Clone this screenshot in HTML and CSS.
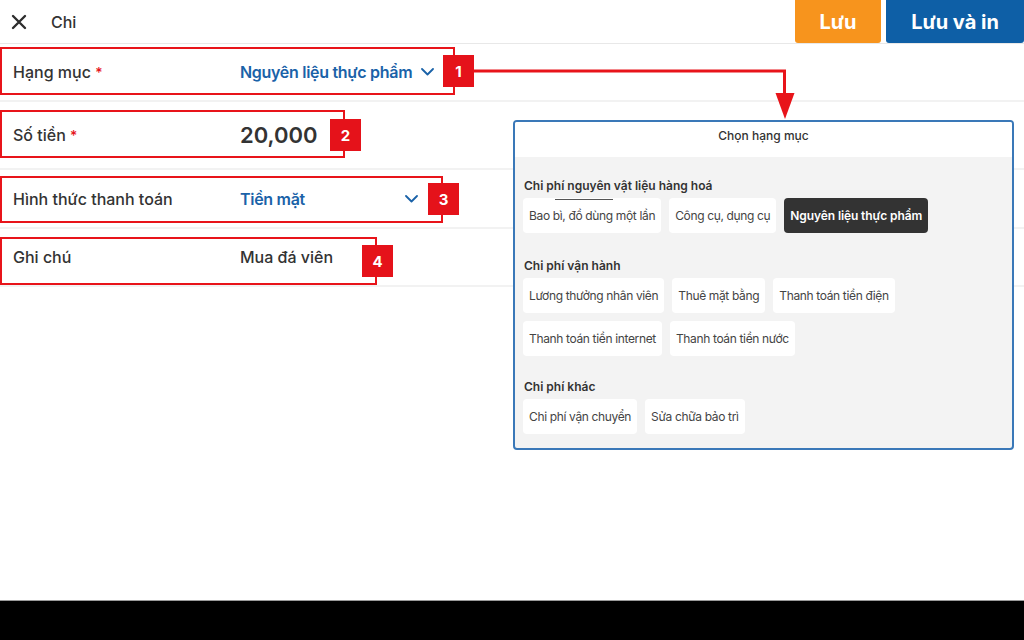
FILE: index.html
```html
<!DOCTYPE html>
<html lang="vi">
<head>
<meta charset="utf-8">
<title>Chi</title>
<link rel="stylesheet" href="styles.css">
</head>
<body>
<div class="screen">
  <header class="topbar">
    <div class="topbar-left">
      <svg class="close-icon" width="16" height="16" viewBox="0 0 16 16"><path d="M2 2L14 14M14 2L2 14" stroke="#2e2e2e" stroke-width="2.4" stroke-linecap="round"/></svg>
      <span class="title">Chi</span>
    </div>
    <div class="actions">
      <button class="btn btn-save">Lưu</button>
      <button class="btn btn-print">Lưu và in</button>
    </div>
  </header>

  <main class="form">
    <div class="row row-1">
      <div class="label">Hạng mục <span class="req">*</span></div>
      <div class="value value-link">Nguyên liệu thực phẩm
        <svg class="chev" width="13" height="8" viewBox="0 0 13 8"><path d="M1 1L6.5 6.5L12 1" fill="none" stroke="#1a62a8" stroke-width="1.8" stroke-linecap="round" stroke-linejoin="round"/></svg>
      </div>
    </div>
    <div class="row row-2">
      <div class="label">Số tiền <span class="req">*</span></div>
      <div class="value value-amount">20,000</div>
    </div>
    <div class="row row-3">
      <div class="label">Hình thức thanh toán</div>
      <div class="value value-link value-wide">Tiền mặt
        <svg class="chev" width="13" height="8" viewBox="0 0 13 8"><path d="M1 1L6.5 6.5L12 1" fill="none" stroke="#1a62a8" stroke-width="1.8" stroke-linecap="round" stroke-linejoin="round"/></svg>
      </div>
    </div>
    <div class="row row-4">
      <div class="label">Ghi chú</div>
      <div class="value">Mua đá viên</div>
    </div>
  </main>

  <footer class="navbar"></footer>

  <section class="picker">
    <div class="picker-head">Chọn hạng mục</div>
    <div class="picker-body">
      <div class="group">
        <div class="group-title">Chi phí nguyên vật liệu hàng hoá</div>
        <div class="chips">
          <span class="chip chip-mark">Bao bì, đồ dùng một lần</span>
          <span class="chip">Công cụ, dụng cụ</span>
          <span class="chip chip-active">Nguyên liệu thực phẩm</span>
        </div>
      </div>
      <div class="group group-mid">
        <div class="group-title">Chi phí vận hành</div>
        <div class="chips">
          <span class="chip">Lương thưởng nhân viên</span>
          <span class="chip">Thuê mặt bằng</span>
          <span class="chip">Thanh toán tiền điện</span>
          <span class="chip">Thanh toán tiền internet</span>
          <span class="chip">Thanh toán tiền nước</span>
        </div>
      </div>
      <div class="group">
        <div class="group-title">Chi phí khác</div>
        <div class="chips">
          <span class="chip">Chi phí vận chuyển</span>
          <span class="chip">Sửa chữa bảo trì</span>
        </div>
      </div>
    </div>
  </section>

  <div class="note note-1"></div>
  <div class="badge badge-1">1</div>
  <div class="note note-2"></div>
  <div class="badge badge-2">2</div>
  <div class="note note-3"></div>
  <div class="badge badge-3">3</div>
  <div class="note note-4"></div>
  <div class="badge badge-4">4</div>

  <svg class="pointer" width="1024" height="640" viewBox="0 0 1024 640">
    <polyline points="473,71 784.5,71 784.5,96" fill="none" stroke="#e8141a" stroke-width="3"/>
    <polygon points="775.5,93 794.5,93 785,119" fill="#e8141a"/>
  </svg>
</div>
</body>
</html>
```

FILE: styles.css
```css
* { box-sizing: border-box; }
html, body { margin: 0; padding: 0; }
body {
  font-family: Inter, "Noto Sans", "Liberation Sans", sans-serif;
  color: #333;
  background: #fff;
}
.screen {
  position: relative;
  width: 1024px;
  height: 640px;
  overflow: hidden;
  display: flex;
  flex-direction: column;
}

/* top bar */
.topbar {
  height: 44px;
  border-bottom: 1px solid #e8e8e8;
  display: flex;
  justify-content: space-between;
  align-items: stretch;
}
.topbar-left {
  display: flex;
  align-items: center;
  padding-left: 11px;
}
.close-icon { display: block; }
.title {
  margin-left: 24px;
  font-size: 16px;
  font-weight: 500;
  color: #333;
}
.actions {
  display: flex;
  gap: 5px;
  height: 43px;
}
.btn {
  border: none;
  color: #fff;
  font-family: Inter, "Noto Sans", sans-serif;
  font-size: 20px;
  font-weight: 700;
  border-radius: 0 0 3px 3px;
  padding: 0;
  cursor: pointer;
}
.btn-save { width: 86px; background: #f7941d; }
.btn-print { width: 138px; background: #0e5fa6; }

/* form */
.form { flex: 1; }
.row {
  display: flex;
  align-items: center;
  border-bottom: 2px solid #f2f2f2;
}
.row-1 { height: 58px; }
.row-2 { height: 68px; }
.row-3 { height: 59px; }
.row-4 { height: 58px; }
.label {
  width: 240px;
  padding-left: 13px;
  font-size: 16px;
  font-weight: 500;
  color: #333;
}
.req { color: #e5141b; font-size: 14px; }
.value {
  font-size: 16px;
  font-weight: 500;
  color: #333;
  display: flex;
  align-items: center;
}
.value-link { color: #1a62a8; font-weight: 600; letter-spacing: -0.3px; }
.value-link .chev { margin-left: 9px; }
.value-wide { width: 178px; justify-content: space-between; }
.value-wide .chev { margin-left: 0; }
.value-amount { font-size: 22px; font-weight: 600; color: #333; }

/* bottom nav */
.navbar {
  height: 40px;
  background: #000;
  border-top: 1px solid #9a9a9a;
}

/* picker overlay */
.picker {
  position: absolute;
  left: 513px;
  top: 120px;
  width: 501px;
  height: 330px;
  border: 2px solid #3a78b8;
  border-radius: 4px;
  background: #f3f3f3;
  overflow: hidden;
}
.picker-head {
  height: 35px;
  background: #fff;
  display: flex;
  align-items: flex-start;
  justify-content: center;
  padding-top: 6px;
  line-height: 15px;
  font-size: 12px;
  font-weight: 500;
  color: #333;
}
.picker-body { padding: 21px 8px 0 8px; }
.group { margin-bottom: 25px; }
.group-mid { margin-bottom: 23px; }
.group-title {
  font-size: 12px;
  font-weight: 600;
  line-height: 16px;
  color: #333;
  padding-left: 1px;
  margin-bottom: 4px;
}
.chips {
  display: flex;
  flex-wrap: wrap;
  gap: 8px 8px;
}
.chip {
  position: relative;
  height: 35px;
  padding: 0 6px;
  background: #fff;
  border-radius: 4px;
  display: flex;
  align-items: center;
  font-size: 12px;
  letter-spacing: -0.35px;
  color: #444;
  white-space: nowrap;
}
.chip-active {
  background: #333;
  color: #fff;
  font-weight: 600;
  letter-spacing: -0.1px;
}
.chip-mark::before {
  content: "";
  position: absolute;
  left: 32px;
  top: 1px;
  width: 58px;
  height: 1px;
  background: #555;
}

/* annotations */
.note {
  position: absolute;
  left: 0;
  border: 2px solid #e8141a;
}
.note-1 { top: 47px; width: 455px; height: 48px; }
.note-2 { top: 110px; width: 345px; height: 48px; }
.note-3 { top: 176px; width: 443px; height: 47px; }
.note-4 { top: 237px; width: 377px; height: 48px; }
.badge {
  position: absolute;
  width: 31px;
  height: 32px;
  background: #e5121a;
  color: #fff;
  font-size: 15px;
  font-weight: 700;
  display: flex;
  align-items: center;
  justify-content: center;
}
.badge-1 { left: 443px; top: 55px; }
.badge-2 { left: 330px; top: 119px; }
.badge-3 { left: 428px; top: 183px; }
.badge-4 { left: 362px; top: 245px; }
.pointer {
  position: absolute;
  left: 0;
  top: 0;
  pointer-events: none;
}
```
